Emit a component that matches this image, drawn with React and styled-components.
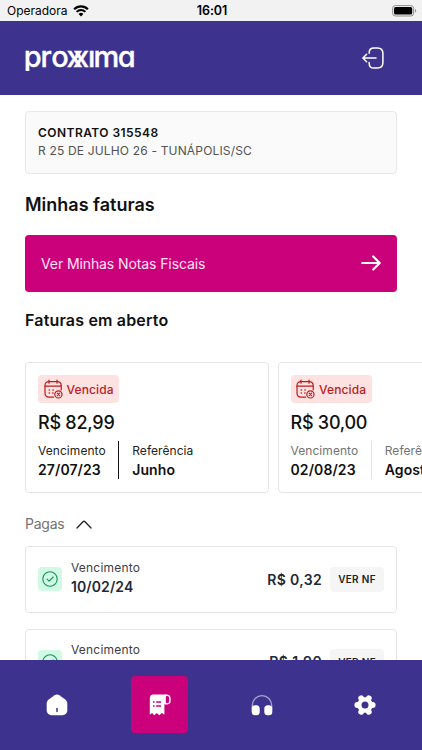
import React from "react";
import styled, { createGlobalStyle } from "styled-components";

const openInvoices = [
  { id: 1, amount: "R$ 82,99", due: "27/07/23", month: "Junho", active: true },
  { id: 2, amount: "R$ 30,00", due: "02/08/23", month: "Agosto", active: false },
];

const paidInvoices = [
  { id: 1, due: "10/02/24", amount: "R$ 0,32" },
  { id: 2, due: "10/01/24", amount: "R$ 1,90" },
];

const WifiIcon = () => (
  <svg width="16" height="12" viewBox="0 0 16 12" fill="none" stroke="#000">
    <path d="M1.1 4.2a9.8 9.8 0 0 1 13.8 0" strokeWidth="2.1" />
    <path d="M3.6 6.9a6.3 6.3 0 0 1 8.800 0" strokeWidth="2" />
    <path d="M8 11.4 5.6 8.900a3.5 3.5 0 0 1 4.800 0z" fill="#000" stroke="none" />
  </svg>
);

const BatteryIcon = () => (
  <svg width="25" height="12" viewBox="0 0 25 12">
    <rect x="0.6" y="0.6" width="21" height="10.4" rx="2.8" fill="none" stroke="#8e8e8e" />
    <rect x="2" y="2" width="18.2" height="7.6" rx="1.6" fill="#000" />
    <path d="M23 4v3.6c.8-.3 1.2-1 1.2-1.8S23.800 4.300 23 4z" fill="#8e8e8e" />
  </svg>
);

const Logo = () => (
  <LogoSvg width="112" height="26" viewBox="0 0 112 26">
    <LogoText x="-1.200 15.400 26.200 41.400 48 63 68.600 92.800" y="22">
      proxxima
    </LogoText>
  </LogoSvg>
);

const ExitIcon = () => (
  <svg width="22" height="22" viewBox="0 0 22 22" fill="none" stroke="#fff" strokeWidth="1.5" strokeLinecap="round" strokeLinejoin="round">
    <path d="M7.200 6.200V5.600C7.200 2.400 9 .9 12 .9h3.400c3.700 0 5.500 1.800 5.500 5.500v9.200c0 3.700-1.800 5.500-5.500 5.500H12c-3 0-4.800-1.500-4.800-4.700v-.9" />
    <path d="M14 11H1.300M4.600 7.300.9 11l3.700 3.700" />
  </svg>
);

const ArrowIcon = () => (
  <svg width="20" height="16" viewBox="0 0 20 16" fill="none" stroke="#fff" strokeWidth="2.200" strokeLinecap="round" strokeLinejoin="round">
    <path d="M1.200 8h17.300M12.200 1.500 18.700 8l-6.500 6.500" />
  </svg>
);

const CalendarIcon = () => (
  <svg width="19" height="20" viewBox="0 0 19 20" fill="none" stroke="#b91c1c" strokeWidth="1.200" strokeLinecap="round">
    <path d="M5 1v3.200M13 1v3.200M1 7.200h16.200" />
    <path d="M9.600 18.200H5.200C2.300 18.200 1 16.700 1 14V6.600c0-2.700 1.300-4 4.200-4H13c2.900 0 4.200 1.300 4.200 4v4.300" />
    <path d="M5.300 11h.1M5.300 14h.1M9 11h.1M8.800 14h.1" strokeWidth="1.600" />
    <circle cx="14.400" cy="15.400" r="3.600" />
    <path d="m13.200 14.200 2.400 2.400m0-2.400-2.400 2.400" />
  </svg>
);

const ChevronIcon = () => (
  <svg width="16" height="9" viewBox="0 0 16 9" fill="none" stroke="#222" strokeWidth="1.300" strokeLinecap="round" strokeLinejoin="round">
    <path d="M1 8 7 1.700c.6-.6 1.400-.6 2 0L15 8" />
  </svg>
);

const CheckIcon = () => (
  <svg width="16" height="16" viewBox="0 0 16 16" fill="none" stroke="#16905c" strokeLinecap="round" strokeLinejoin="round">
    <circle cx="8" cy="8" r="7.200" strokeWidth="1.100" />
    <path d="m5 8.100 2.100 2.100L11.200 6" strokeWidth="1.100" />
  </svg>
);

const HomeIcon = () => (
  <svg width="22" height="22" viewBox="0 0 22 22">
    <path fill="#fff" d="M8.700 1.200c1.400-.9 3.200-.9 4.600 0l5.700 4c1.400 1 2.300 2.600 2.300 4.300v6.800c0 3-1.900 4.900-4.900 4.900H5.600c-3 0-4.900-1.900-4.900-4.900V9.500c0-1.700.9-3.300 2.300-4.300z" />
    <path stroke="#3d338f" strokeWidth="1.500" strokeLinecap="round" d="M11 14.500v3" />
  </svg>
);

const ReceiptIcon = () => (
  <svg width="22" height="22" viewBox="0 0 22 22">
    <path fill="#fff" d="M4.200.5H17v9.300h-1.600v11l-2.500-1.900-2.600 2.300-2.500-2.300-2.600 2.300-2.100-2.300L.8 20.800V4.700C.8 2 1.900.5 4.200.5z" />
    <path fill="none" stroke="#fff" strokeWidth="1.400" d="M16.200 1.200h1.600c2 0 3.100 1.100 3.100 3.100v2.800c0 1.700-.8 2.600-2.500 2.600h-2.200V3.200c0-1.100.5-2 1.600-2" />
    <path stroke="#cb007b" strokeWidth="1.500" d="M7.200 8h4.900M7.200 12h4.900M4 8h1.600M4 12h1.600" />
    <path fill="#cb007b" d="M16.900 3.400c0-.8.3-1.200.9-1.200 1.500 0 2.200.7 2.200 2.200v2.500c0 1.300-.5 1.900-1.700 1.900h-1.400z" />
  </svg>
);

const HeadphonesIcon = () => (
  <svg width="22" height="22" viewBox="0 0 22 22">
    <path fill="none" stroke="#a9a3d2" strokeWidth="1.300" d="M1.300 15v-3.700a9.700 9.700 0 0 1 19.400 0V15" />
    <rect x="0.700" y="11.300" width="8" height="10" rx="3.500" fill="#fff" />
    <rect x="13.300" y="11.300" width="8" height="10" rx="3.500" fill="#fff" />
  </svg>
);

const GearIcon = () => (
  <svg width="22" height="22" viewBox="0 0 22 22">
    <g stroke="#fff" strokeWidth="5.800" strokeLinecap="round">
      <path d="M3.300 11h15.400M7.200 4.200l7.600 13.600M14.800 4.200 7.200 17.800" />
    </g>
    <circle cx="11" cy="11" r="7.800" fill="#fff" />
    <circle cx="11" cy="11" r="3.500" fill="#3d338f" />
  </svg>
);

const App = () => {
  return (
    <Screen>
      <GlobalStyle />
      <StatusBar>
        <Carrier>
          Operadora <WifiIcon />
        </Carrier>
        <Clock>16:01</Clock>
        <Battery>
          <BatteryIcon />
        </Battery>
      </StatusBar>
      <Header>
        <Logo />
        <IconButton aria-label="Sair">
          <ExitIcon />
        </IconButton>
      </Header>
      <Content>
        <Contract>
          <ContractTitle>CONTRATO 315548</ContractTitle>
          <ContractAddress>R 25 DE JULHO 26 - TUNÁPOLIS/SC</ContractAddress>
        </Contract>
        <Title>Minhas faturas</Title>
        <NotesButton>
          Ver Minhas Notas Fiscais
          <ArrowIcon />
        </NotesButton>
        <Subtitle>Faturas em aberto</Subtitle>
        <Carousel>
          {openInvoices.map((invoice) => (
            <OpenCard key={invoice.id}>
              <Badge>
                <CalendarIcon />
                Vencida
              </Badge>
              <Amount>{invoice.amount}</Amount>
              <Details>
                <Detail>
                  <DetailLabel $active={invoice.active}>Vencimento</DetailLabel>
                  <DetailValue>{invoice.due}</DetailValue>
                </Detail>
                <Separator $active={invoice.active} />
                <Detail>
                  <DetailLabel $active={invoice.active}>Referência</DetailLabel>
                  <DetailValue>{invoice.month}</DetailValue>
                </Detail>
              </Details>
            </OpenCard>
          ))}
        </Carousel>
        <PaidToggle>
          Pagas
          <ChevronIcon />
        </PaidToggle>
        <PaidList>
          {paidInvoices.map((invoice) => (
            <PaidCard key={invoice.id}>
              <CheckBox>
                <CheckIcon />
              </CheckBox>
              <PaidInfo>
                <PaidLabel>Vencimento</PaidLabel>
                <PaidDate>{invoice.due}</PaidDate>
              </PaidInfo>
              <PaidAmount>{invoice.amount}</PaidAmount>
              <NfButton>VER NF</NfButton>
            </PaidCard>
          ))}
        </PaidList>
      </Content>
      <TabBar>
        <Tab aria-label="Início">
          <HomeIcon />
        </Tab>
        <Tab aria-label="Faturas" $selected>
          <ReceiptIcon />
        </Tab>
        <Tab aria-label="Suporte">
          <HeadphonesIcon />
        </Tab>
        <Tab aria-label="Ajustes">
          <GearIcon />
        </Tab>
      </TabBar>
    </Screen>
  );
};

export default App;

// Styled Components
const GlobalStyle = createGlobalStyle`
  * {
    box-sizing: border-box;
  }

  body {
    margin: 0;
    font-family: Inter, "Liberation Sans", sans-serif;
    color: #111;
  }

  button {
    font-family: inherit;
    border: none;
    padding: 0;
    background: none;
  }

  svg {
    display: block;
    flex-shrink: 0;
  }
`;

const Screen = styled.div`
  height: 750px;
  display: flex;
  flex-direction: column;
  background: #fff;
  overflow: hidden;
`;

const StatusBar = styled.div`
  height: 21px;
  flex-shrink: 0;
  display: grid;
  grid-template-columns: 1fr auto 1fr;
  align-items: center;
  padding: 0 5px 0 7px;
  background: #f2f2f3;
  color: #000;
  font-size: 12px;
`;

const Carrier = styled.div`
  display: flex;
  align-items: center;
  gap: 5px;
`;

const Clock = styled.div`
  font-size: 12.5px;
  font-weight: 600;
  letter-spacing: -0.1px;
`;

const Battery = styled.div`
  display: flex;
  justify-content: flex-end;
`;

const Header = styled.header`
  height: 74px;
  flex-shrink: 0;
  display: flex;
  align-items: center;
  justify-content: space-between;
  padding: 0 38px 0 25px;
  background: #3d338f;
`;

const LogoSvg = styled.svg`
  overflow: hidden;
  clip-path: inset(4.5px 0 0 0);
`;

const LogoText = styled.text`
  font-size: 29px;
  font-weight: 500;
  font-feature-settings: "cv11";
  fill: #fff;
  stroke: #fff;
  stroke-width: 0.3px;
`;

const IconButton = styled.button`
  display: flex;
`;

const Content = styled.main`
  flex: 1;
  min-height: 0;
  padding: 16px 25px 0;
  overflow: hidden;
`;

const Contract = styled.section`
  height: 63px;
  padding: 12px 12px 0;
  border: 1px solid #e8e8e8;
  border-radius: 4px;
  background: #fafafa;
`;

const ContractTitle = styled.div`
  font-size: 12px;
  line-height: 18px;
  font-weight: 600;
  letter-spacing: 0.45px;
`;

const ContractAddress = styled.div`
  font-size: 12px;
  line-height: 18px;
  letter-spacing: 0.17px;
  color: #525252;
`;

const Title = styled.h1`
  margin: 19px 0 18px;
  font-size: 18px;
  line-height: 24px;
  font-weight: 600;
`;

const NotesButton = styled.button`
  width: 100%;
  height: 57px;
  display: flex;
  align-items: center;
  justify-content: space-between;
  padding: 0 16px 1px;
  border-radius: 4px;
  background: #cb007b;
  color: #ffe3f4;
  font-size: 14px;
  letter-spacing: -0.1px;
`;

const Subtitle = styled.h2`
  margin: 18px 0 32px;
  font-size: 16px;
  line-height: 20px;
  font-weight: 600;
  letter-spacing: 0.18px;
`;

const Carousel = styled.div`
  display: flex;
  gap: 8.5px;
  margin-right: -25px;
  overflow: hidden;
`;

const OpenCard = styled.article`
  width: 244px;
  height: 131px;
  flex-shrink: 0;
  padding: 12px;
  border: 1px solid #e5e5e5;
  border-radius: 4px;
`;

const Badge = styled.div`
  width: 81px;
  height: 28px;
  display: flex;
  align-items: center;
  gap: 4px;
  padding-left: 5.5px;
  border-radius: 4px;
  background: #fee2e2;
  color: #b91c1c;
  font-size: 12px;
  font-weight: 500;
  letter-spacing: 0.12px;
`;

const Amount = styled.div`
  margin-top: 8px;
  font-size: 18px;
  line-height: 24px;
  font-weight: 500;
  letter-spacing: -0.25px;
`;

const Details = styled.div`
  display: flex;
  margin-top: 6px;
`;

const Detail = styled.div`
  white-space: nowrap;
`;

const DetailLabel = styled.div`
  font-size: 12px;
  line-height: 20px;
  letter-spacing: 0.06px;
  color: ${({ $active }) => ($active ? "#222" : "#737373")};
`;

const DetailValue = styled.div`
  font-size: 14px;
  line-height: 17px;
  font-weight: 600;
  letter-spacing: 0.1px;
`;

const Separator = styled.div`
  width: 1px;
  height: 38px;
  margin: 0 13px 0 12.5px;
  background: ${({ $active }) => ($active ? "#111" : "#e5e5e5")};
`;

const PaidToggle = styled.button`
  height: 20px;
  display: flex;
  align-items: center;
  gap: 12px;
  margin: 21px 0 12px;
  color: #737373;
  font-size: 14px;
  line-height: 20px;
  letter-spacing: -0.25px;
`;

const PaidList = styled.div`
  display: flex;
  flex-direction: column;
  gap: 16px;
`;

const PaidCard = styled.article`
  height: 66.5px;
  flex-shrink: 0;
  display: flex;
  align-items: center;
  padding: 0 12px;
  border: 1px solid #e5e5e5;
  border-radius: 4px;
`;

const CheckBox = styled.div`
  width: 24px;
  height: 24px;
  display: grid;
  place-items: center;
  border-radius: 4px;
  background: #d1fae5;
`;

const PaidInfo = styled.div`
  flex: 1;
  margin-left: 9px;
  padding-bottom: 4px;
`;

const PaidLabel = styled.div`
  font-size: 12px;
  line-height: 19px;
  letter-spacing: 0.2px;
  color: #404040;
`;

const PaidDate = styled.div`
  font-size: 14px;
  line-height: 20px;
  font-weight: 600;
  letter-spacing: 0.1px;
  color: #1f2937;
`;

const PaidAmount = styled.div`
  margin-right: 8px;
  font-size: 14px;
  font-weight: 600;
  letter-spacing: 0.35px;
  color: #1f2937;
`;

const NfButton = styled.button`
  width: 54px;
  height: 25px;
  border-radius: 4px;
  background: #f5f5f5;
  color: #222;
  font-size: 10px;
  font-weight: 600;
  letter-spacing: 0.3px;
`;

const TabBar = styled.nav`
  height: 90px;
  flex-shrink: 0;
  display: flex;
  justify-content: space-between;
  padding: 16px 28.5px 0;
  background: #3d338f;
`;

const Tab = styled.button`
  width: 57px;
  height: 57px;
  display: grid;
  place-items: center;
  border-radius: 4px;
  background: ${({ $selected }) => ($selected ? "#cb007b" : "transparent")};
`;
